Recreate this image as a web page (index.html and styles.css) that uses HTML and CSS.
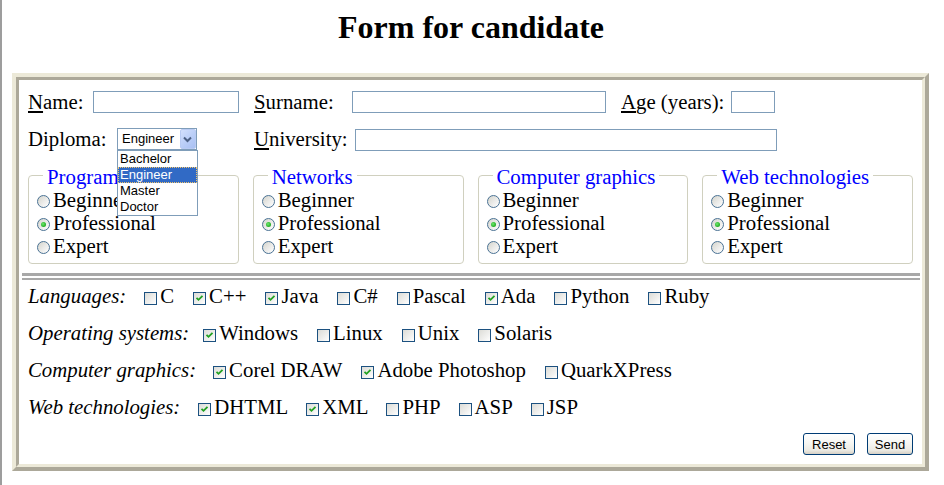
FILE: index.html
```html
<!DOCTYPE html>
<html>
<head>
<meta charset="utf-8">
<title>Form for candidate</title>
<link rel="stylesheet" href="styles.css">
</head>
<body>
<h1 class="title">Form for candidate</h1>
<form class="frame">
  <div class="frame-inner">
    <div class="row">
      <label class="lbl lbl-name"><u>N</u>ame:</label>
      <input class="txt txt-name" type="text">
      <label class="lbl lbl-surname"><u>S</u>urname:</label>
      <input class="txt txt-surname" type="text">
      <label class="lbl lbl-age"><u>A</u>ge (years):</label>
      <input class="txt txt-age" type="text">
    </div>
    <div class="row row-2">
      <label class="lbl lbl-diploma">Diploma:</label>
      <div class="combo">
        <div class="combo-box">
          <span class="combo-value">Engineer</span>
          <span class="combo-btn"><svg width="15" height="20" viewBox="0 0 15 20"><path d="M4 8.5 L7.5 12 L11 8.5" fill="none" stroke="#4d6185" stroke-width="2"/></svg></span>
        </div>
        <ul class="combo-list">
          <li>Bachelor</li>
          <li class="sel">Engineer</li>
          <li>Master</li>
          <li>Doctor</li>
        </ul>
      </div>
      <label class="lbl lbl-univ"><u>U</u>niversity:</label>
      <input class="txt txt-univ" type="text">
    </div>

    <div class="levels">
      <fieldset class="level">
        <legend>Programming</legend>
        <div class="opt"><span class="radio"></span>Beginner</div>
        <div class="opt"><span class="radio on"></span>Professional</div>
        <div class="opt"><span class="radio"></span>Expert</div>
      </fieldset>
      <fieldset class="level">
        <legend>Networks</legend>
        <div class="opt"><span class="radio"></span>Beginner</div>
        <div class="opt"><span class="radio on"></span>Professional</div>
        <div class="opt"><span class="radio"></span>Expert</div>
      </fieldset>
      <fieldset class="level">
        <legend>Computer graphics</legend>
        <div class="opt"><span class="radio"></span>Beginner</div>
        <div class="opt"><span class="radio on"></span>Professional</div>
        <div class="opt"><span class="radio"></span>Expert</div>
      </fieldset>
      <fieldset class="level">
        <legend>Web technologies</legend>
        <div class="opt"><span class="radio"></span>Beginner</div>
        <div class="opt"><span class="radio on"></span>Professional</div>
        <div class="opt"><span class="radio"></span>Expert</div>
      </fieldset>
    </div>

    <div class="sep"></div>

    <div class="checks">
      <div class="crow crow-lang">
        <span class="clabel">Languages:</span>
        <span class="item"><span class="cb"></span>C</span>
        <span class="item"><span class="cb"><svg class="tick" width="11" height="11" viewBox="0 0 11 11"><path d="M2.5 4.8 L4.5 6.8 L8.5 2.8" fill="none" stroke="#21a121" stroke-width="1.8"/></svg></span>C++</span>
        <span class="item"><span class="cb"><svg class="tick" width="11" height="11" viewBox="0 0 11 11"><path d="M2.5 4.8 L4.5 6.8 L8.5 2.8" fill="none" stroke="#21a121" stroke-width="1.8"/></svg></span>Java</span>
        <span class="item"><span class="cb"></span>C#</span>
        <span class="item"><span class="cb"></span>Pascal</span>
        <span class="item"><span class="cb"><svg class="tick" width="11" height="11" viewBox="0 0 11 11"><path d="M2.5 4.8 L4.5 6.8 L8.5 2.8" fill="none" stroke="#21a121" stroke-width="1.8"/></svg></span>Ada</span>
        <span class="item"><span class="cb"></span>Python</span>
        <span class="item"><span class="cb"></span>Ruby</span>
      </div>
      <div class="crow crow-os">
        <span class="clabel">Operating systems:</span>
        <span class="item"><span class="cb"><svg class="tick" width="11" height="11" viewBox="0 0 11 11"><path d="M2.5 4.8 L4.5 6.8 L8.5 2.8" fill="none" stroke="#21a121" stroke-width="1.8"/></svg></span>Windows</span>
        <span class="item"><span class="cb"></span>Linux</span>
        <span class="item"><span class="cb"></span>Unix</span>
        <span class="item"><span class="cb"></span>Solaris</span>
      </div>
      <div class="crow crow-cg">
        <span class="clabel">Computer graphics:</span>
        <span class="item"><span class="cb"><svg class="tick" width="11" height="11" viewBox="0 0 11 11"><path d="M2.5 4.8 L4.5 6.8 L8.5 2.8" fill="none" stroke="#21a121" stroke-width="1.8"/></svg></span>Corel DRAW</span>
        <span class="item"><span class="cb"><svg class="tick" width="11" height="11" viewBox="0 0 11 11"><path d="M2.5 4.8 L4.5 6.8 L8.5 2.8" fill="none" stroke="#21a121" stroke-width="1.8"/></svg></span>Adobe Photoshop</span>
        <span class="item"><span class="cb"></span>QuarkXPress</span>
      </div>
      <div class="crow crow-web">
        <span class="clabel">Web technologies:</span>
        <span class="item"><span class="cb"><svg class="tick" width="11" height="11" viewBox="0 0 11 11"><path d="M2.5 4.8 L4.5 6.8 L8.5 2.8" fill="none" stroke="#21a121" stroke-width="1.8"/></svg></span>DHTML</span>
        <span class="item"><span class="cb"><svg class="tick" width="11" height="11" viewBox="0 0 11 11"><path d="M2.5 4.8 L4.5 6.8 L8.5 2.8" fill="none" stroke="#21a121" stroke-width="1.8"/></svg></span>XML</span>
        <span class="item"><span class="cb"></span>PHP</span>
        <span class="item"><span class="cb"></span>ASP</span>
        <span class="item"><span class="cb"></span>JSP</span>
      </div>
    </div>

    <div class="buttons">
      <button type="button" class="btn btn-reset">Reset</button>
      <button type="button" class="btn btn-send">Send</button>
    </div>
  </div>
</form>
</body>
</html>
```

FILE: styles.css
```css
html, body {
  margin: 0;
  padding: 0;
  background: #ffffff;
}

body {
  min-height: 485px;
  box-sizing: border-box;
  border-left: 2px solid #9d9d9d;
  font-family: "Liberation Serif", "Times New Roman", serif;
  font-size: 20.8px;
  color: #000;
  overflow: hidden;
}

.title {
  margin: 9px 0 27px;
  font-size: 32px;
  line-height: 37px;
  font-weight: bold;
  text-align: center;
  padding-right: 4px;
}

.frame {
  margin: 0 0 0 10px;
  width: 917px;
  box-sizing: border-box;
  border: 4px solid;
  border-color: #ece9d8 #aca899 #aca899 #ece9d8;
}

.frame-inner {
  border: 3px solid;
  border-color: #aca899 #ece9d8 #ece9d8 #aca899;
  padding: 11px 9px 9px 9px;
}

/* top rows */
.row {
  display: flex;
  align-items: center;
  height: 22px;
  line-height: 23px;
}

.row-2 {
  margin-top: 15px;
}

.lbl {
  display: block;
  white-space: nowrap;
  margin-top: -1px;
}

.lbl-name { width: 65px; }
.lbl-surname { width: 98px; }
.lbl-age { width: 110px; }
.lbl-diploma { width: 89px; }
.lbl-univ { width: 101px; }

.txt {
  display: block;
  box-sizing: border-box;
  height: 22px;
  margin: 0;
  padding: 0 2px;
  border: 1px solid #7f9db9;
  background: #fff;
  font: 13px "Liberation Sans", Arial, sans-serif;
}

.txt-name { width: 146px; margin-right: 15px; }
.txt-surname { width: 254px; margin-right: 15px; }
.txt-age { width: 44px; }
.txt-univ { width: 422px; margin-top: 2px; }

/* combo box */
.combo {
  position: relative;
  width: 80px;
  height: 22px;
  margin-right: 57px;
}

.combo-box {
  box-sizing: border-box;
  height: 22px;
  border: 1px solid #7f9db9;
  background: #fff;
  display: flex;
  align-items: center;
  justify-content: space-between;
  padding-left: 4px;
  font: 13px "Liberation Sans", Arial, sans-serif;
  line-height: 20px;
}

.combo-btn {
  display: block;
  box-sizing: border-box;
  width: 16px;
  height: 20px;
  border: 1px solid #b9cbf3;
  border-radius: 2px;
  background: linear-gradient(135deg, #d3e0fd 0%, #b9cdf7 55%, #a9c0f3 100%);
}

.combo-btn svg {
  display: block;
  margin: -1px 0 0 -1px;
}

.combo-list {
  position: absolute;
  z-index: 5;
  top: 22px;
  left: 0;
  width: 81px;
  box-sizing: border-box;
  margin: 0;
  padding: 0;
  list-style: none;
  border: 1px solid #7f9db9;
  background: #fff;
  font: 13px "Liberation Sans", Arial, sans-serif;
  line-height: 16px;
}

.combo-list li {
  height: 16px;
  padding-left: 2px;
  box-sizing: border-box;
}

.combo-list li.sel {
  background: #316ac5;
  color: #fff;
  outline: 1px dotted #f2c46a;
  outline-offset: -1px;
}

/* level fieldsets */
.levels {
  display: grid;
  grid-template-columns: repeat(4, 1fr);
  column-gap: 14px;
  margin-top: 13px;
}

.level {
  margin: 0;
  min-width: 0;
  padding: 0 8px 6px 8px;
  border: 1px solid #d0d0bf;
  border-radius: 4px;
}

.level legend {
  color: #0000ff;
  line-height: 23px;
  padding: 2px 4px 0;
  margin-left: 6px;
  white-space: nowrap;
}

.opt {
  line-height: 23px;
  white-space: nowrap;
}

.radio {
  display: inline-block;
  position: relative;
  box-sizing: border-box;
  width: 13px;
  height: 13px;
  margin-right: 3px;
  vertical-align: -1px;
  border: 1px solid #4a7294;
  border-radius: 50%;
  background: linear-gradient(135deg, #d4d4cc 0%, #ececea 55%, #ffffff 100%);
}

.radio.on::after {
  content: "";
  position: absolute;
  left: 3px;
  top: 3px;
  width: 5px;
  height: 5px;
  border-radius: 50%;
  background: radial-gradient(circle at 40% 40%, #6ee86e 0%, #2cb42c 60%, #1c8f1c 100%);
}

/* separator */
.sep {
  margin: 9px -7px 0 -6px;
  height: 2px;
  border-top: 3px solid #a8a8a8;
  border-bottom: 2px solid #a8a8a8;
}

/* checkbox rows */
.checks {
  padding-top: 4px;
}

.crow {
  display: flex;
  column-gap: 19px;
  line-height: 23px;
  white-space: nowrap;
}

.crow + .crow {
  margin-top: 14px;
}

.clabel {
  font-style: italic;
  margin-right: -1px;
}

.crow-os .clabel { margin-right: -5px; }
.crow-cg .clabel { margin-right: -2px; }
.crow-web { column-gap: 18px; }
.crow-web .clabel { margin-right: 0; }

.cb {
  display: inline-block;
  box-sizing: border-box;
  width: 13px;
  height: 13px;
  margin-right: 3px;
  vertical-align: -2px;
  border: 1px solid #1c5180;
  background: linear-gradient(135deg, #dcdcd7 0%, #f0f0ee 60%, #ffffff 100%);
}

.tick {
  display: block;
}

/* buttons */
.buttons {
  display: flex;
  justify-content: flex-end;
  column-gap: 12px;
  margin-top: 15px;
}

.btn {
  box-sizing: border-box;
  height: 22px;
  margin: 0;
  padding: 0;
  border: 1px solid #003c74;
  border-radius: 3px;
  background: linear-gradient(#ffffff 0%, #f7f7f3 45%, #ecebe4 80%, #d6d0c5 100%);
  font: 13px "Liberation Sans", Arial, sans-serif;
  color: #000;
}

.btn-reset { width: 52px; }
.btn-send { width: 46px; }
```
